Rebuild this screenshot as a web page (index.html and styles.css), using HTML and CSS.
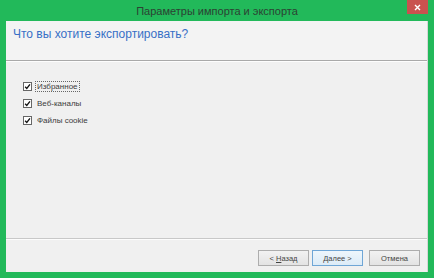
FILE: index.html
```html
<!DOCTYPE html>
<html lang="ru">
<head>
<meta charset="utf-8">
<link rel="stylesheet" href="styles.css">
</head>
<body>
<div class="window">
  <div class="titlebar">
    <span class="title">Параметры импорта и экспорта</span>
    <span class="close"><svg width="7" height="7" viewBox="0 0 7 7"><path d="M1 1L6 6M6 1L1 6" stroke="#fff" stroke-width="1.4"/></svg></span>
  </div>
  <div class="client">
    <div class="header">Что вы хотите экспортировать?</div>
    <div class="main">
      <ul class="checks">
        <li class="row"><span class="box"><svg width="8" height="8" viewBox="0 0 8 8"><path d="M1.3 4.2L3.2 6.2L6.8 1.6" fill="none" stroke="#111" stroke-width="1.5"/></svg></span><span class="label focus">Избранное</span></li>
        <li class="row"><span class="box"><svg width="8" height="8" viewBox="0 0 8 8"><path d="M1.3 4.2L3.2 6.2L6.8 1.6" fill="none" stroke="#111" stroke-width="1.5"/></svg></span><span class="label">Веб-каналы</span></li>
        <li class="row"><span class="box"><svg width="8" height="8" viewBox="0 0 8 8"><path d="M1.3 4.2L3.2 6.2L6.8 1.6" fill="none" stroke="#111" stroke-width="1.5"/></svg></span><span class="label">Файлы cookie</span></li>
      </ul>
    </div>
    <div class="footer">
      <button class="btn">&lt; <u>Н</u>азад</button>
      <button class="btn default"><u>Д</u>алее &gt;</button>
      <button class="btn cancel">Отмена</button>
    </div>
  </div>
</div>
</body>
</html>
```

FILE: styles.css
```css
html, body {
  margin: 0;
  padding: 0;
  background: #22b95a;
}
.window {
  width: 434px;
  height: 278px;
  box-sizing: border-box;
  background: #22b95a;
  padding: 0 6px 6px 6px;
  display: flex;
  flex-direction: column;
  font-family: "Liberation Sans", Arial, sans-serif;
}
.titlebar {
  position: relative;
  height: 21px;
  flex: none;
  display: flex;
  align-items: center;
  justify-content: center;
}
.title {
  font-size: 11px;
  color: #2c4233;
  padding-top: 1px;
}
.close {
  position: absolute;
  right: 0;
  top: 0;
  width: 21px;
  height: 14px;
  background: #c9524f;
  display: flex;
  align-items: center;
  justify-content: center;
}
.client {
  flex: 1;
  display: flex;
  flex-direction: column;
  background: #f0f0f0;
  border-right: 1px solid #d6d6d6;
}
.header {
  height: 40px;
  flex: none;
  box-sizing: border-box;
  padding: 6px 0 0 7px;
  font-size: 12px;
  color: #3870c6;
  background: #f3f3f3;
  border-bottom: 1px solid #a9a9a9;
  box-shadow: 0 1px 0 #fdfdfd;
}
.main {
  flex: 1;
  padding: 21px 0 0 17px;
}
.checks {
  list-style: none;
  margin: 0;
  padding: 0;
  display: flex;
  flex-direction: column;
  gap: 8px;
}
.row {
  display: flex;
  align-items: center;
  height: 9px;
  gap: 3px;
  font-size: 8px;
  color: #3c3c3c;
}
.box {
  width: 7px;
  height: 7px;
  border: 1px solid #666;
  background: #fff;
  display: flex;
  align-items: center;
  justify-content: center;
}
.box svg {
  width: 7px;
  height: 7px;
}
.label {
  padding: 0 1px;
  line-height: 9px;
  border: 1px solid transparent;
}
.label.focus {
  border: 1px dotted #666;
}
.footer {
  height: 34px;
  flex: none;
  box-sizing: border-box;
  border-top: 1px solid #c8c8c8;
  box-shadow: inset 0 1px 0 #fcfcfc;
  display: flex;
  justify-content: flex-end;
  align-items: flex-start;
  padding: 11px 7px 0 0;
  gap: 3px;
}
.btn {
  width: 51px;
  height: 16px;
  padding: 0;
  margin: 0;
  font-family: "Liberation Sans", Arial, sans-serif;
  font-size: 7.5px;
  color: #444;
  background: linear-gradient(#f2f2f2, #e3e3e3);
  border: 1px solid #adadad;
  border-radius: 0;
}
.btn.default {
  border-color: #6fa6d6;
  background: linear-gradient(#eef6fc, #dcebf7);
}
.btn.cancel {
  margin-left: 3px;
}
```
